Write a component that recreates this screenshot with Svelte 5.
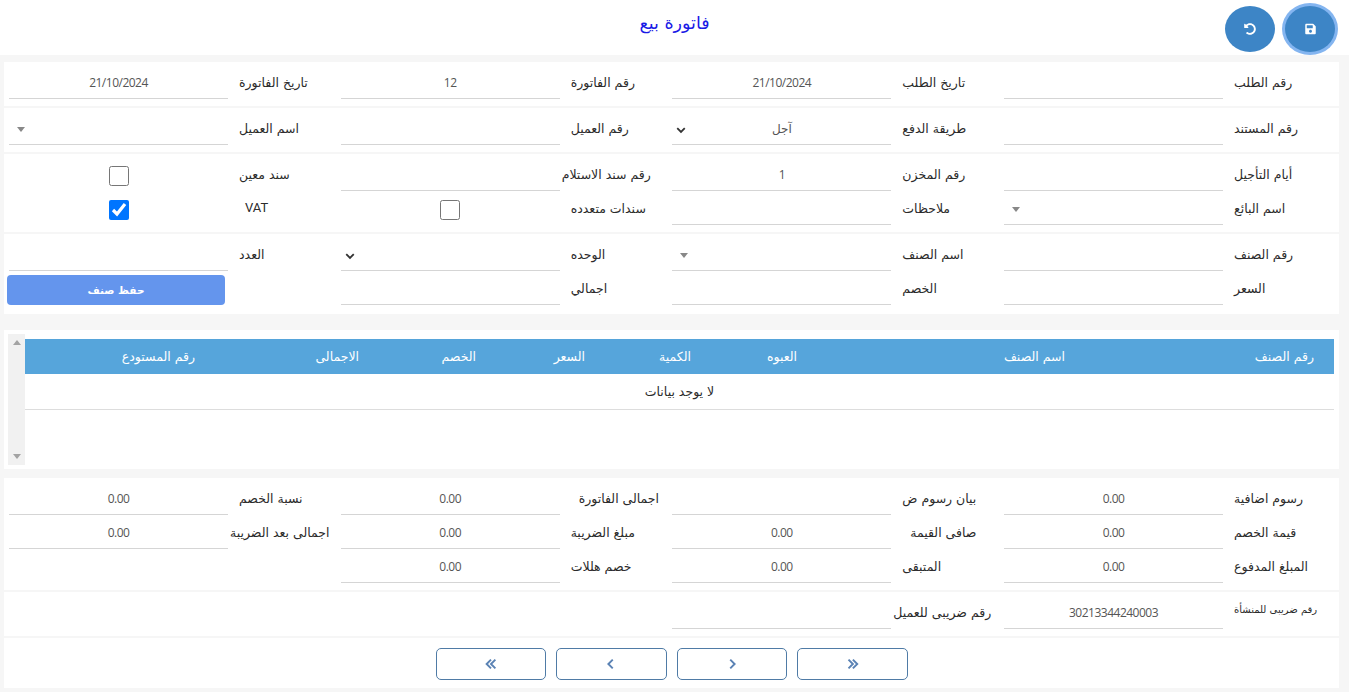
<script>
  const txt = (label, value = '', kind = 'text', cls = '') => ({ label, value, kind, cls });
  const top = [
    [txt('رقم الطلب'), txt('تاريخ الطلب', '21/10/2024'), txt('رقم الفاتورة', '12'), txt('تاريخ الفاتورة', '21/10/2024')],
    [txt('رقم المستند'), txt('طريقة الدفع', 'آجل', 'chevron'), txt('رقم العميل'), txt('اسم العميل', '', 'tri')],
    [txt('أيام التأجيل'), txt('رقم المخزن', '1'), txt('رقم سند الاستلام', '', 'text', 'p4'), txt('سند معين', '', 'check'),
     txt('اسم البائع', '', 'tri'), txt('ملاحظات'), txt('سندات متعدده', '', 'check'), txt('VAT', '', 'checked', 'vat')],
    [txt('رقم الصنف'), txt('اسم الصنف', '', 'tri'), txt('الوحده', '', 'chevron'), txt('العدد'),
     txt('السعر'), txt('الخصم'), txt('اجمالي'), txt('', '', 'button')]
  ];
  const bottom = [
    txt('رسوم اضافية', '0.00'), txt('بيان رسوم ض'), txt('اجمالى الفاتورة', '0.00', 'text', 'p18'), txt('نسبة الخصم', '0.00'),
    txt('قيمة الخصم', '0.00'), txt('صافى القيمة', '0.00', 'text', 'p18'), txt('مبلغ الضريبة', '0.00'), txt('اجمالى بعد الضريبة', '0.00', 'text', 'p2'),
    txt('المبلغ المدفوع', '0.00'), txt('المتبقى', '0.00'), txt('خصم هللات', '0.00')
  ];
  const tax = [txt('رقم ضريبى للمنشأة', '30213344240003', 'text', 'small'), txt('رقم ضريبى للعميل', '', 'text', 'p2')];
  const heads = ['رقم الصنف', 'اسم الصنف', 'العبوه', 'الكمية', 'السعر', 'الخصم', 'الاجمالى', 'رقم المستودع'];
</script>

{#snippet field(f)}
  <div class="field">
    <div class="label {f.cls}">{f.label}</div>
    {#if f.kind === 'button'}
      <button class="save-item">حفظ صنف</button>
    {:else if f.kind === 'check' || f.kind === 'checked'}
      <div class="box"><input type="checkbox" checked={f.kind === 'checked'} /></div>
    {:else}
      <div class="input">
        {f.value}
        {#if f.kind === 'chevron'}
          <svg class="chev" viewBox="0 0 16 16"><path d="M3 5.5l5 5 5-5" fill="none" stroke="#333" stroke-width="2.4"/></svg>
        {:else if f.kind === 'tri'}
          <span class="tri"></span>
        {/if}
      </div>
    {/if}
  </div>
{/snippet}

<div class="page" dir="rtl">
  <header class="head">
    <h1>فاتورة بيع</h1>
    <div class="actions">
      <button class="round focus" aria-label="حفظ">
        <svg viewBox="0 0 448 512" width="11" height="12"><path fill="#fff" d="M433.941 129.941l-83.882-83.882A48 48 0 0 0 316.118 32H48C21.49 32 0 53.49 0 80v352c0 26.51 21.49 48 48 48h352c26.51 0 48-21.49 48-48V163.882a48 48 0 0 0-14.059-33.941zM224 416c-35.346 0-64-28.654-64-64 0-35.346 28.654-64 64-64s64 28.654 64 64c0 35.346-28.654 64-64 64zm96-304.52V212c0 6.627-5.373 12-12 12H76c-6.627 0-12-5.373-12-12V108c0-6.627 5.373-12 12-12h228.52c3.183 0 6.235 1.264 8.485 3.515l3.48 3.48A11.996 11.996 0 0 1 320 111.48z"/></svg>
      </button>
      <button class="round" aria-label="تراجع">
        <svg viewBox="0 0 512 512" width="12" height="12"><path fill="#fff" d="M255.545 8c-66.269.119-126.438 26.233-170.86 68.685L48.971 40.971C33.851 25.851 8 36.559 8 57.941V192c0 13.255 10.745 24 24 24h134.059c21.382 0 32.09-25.851 16.971-40.971l-41.75-41.75c30.864-28.899 70.801-44.907 113.23-45.273 92.398-.798 170.283 73.977 169.484 169.442C423.236 348.009 349.816 424 256 424c-41.127 0-79.997-14.678-110.63-41.556-4.743-4.161-11.906-3.908-16.368.553L89.34 422.659c-4.872 4.872-4.631 12.815.482 17.433C133.798 479.813 192.074 504 256 504c136.966 0 247.999-111.033 248-247.998C504.001 119.193 392.354 7.755 255.545 8z"/></svg>
      </button>
    </div>
  </header>

  <main class="content">
    <section class="stack">
      {#each top as row, i}
        <div class="row" class:last={i === 3}>
          {#each row as f}{@render field(f)}{/each}
        </div>
      {/each}
    </section>

    <section class="table-panel">
      <div class="table">
        <div class="tr th">
          {#each heads as h}<div class="cell">{h}</div>{/each}
        </div>
        <div class="empty">لا يوجد بيانات</div>
      </div>
      <div class="scroll">
        <span class="up"></span>
        <span class="down"></span>
      </div>
    </section>

    <section class="stack">
      <div class="row">
        {#each bottom as f}{@render field(f)}{/each}
      </div>
      <div class="row">
        {#each tax as f}{@render field(f)}{/each}
      </div>
      <nav class="pager">
        {#each ['M4 3l5 5-5 5M9 3l5 5-5 5', 'M6 3l5 5-5 5', 'M10 3L5 8l5 5', 'M8 3L3 8l5 5M13 3L8 8l5 5'] as d}
          <button aria-label="تنقل"><svg viewBox="0 0 16 16" width="14" height="14"><path {d} fill="none" stroke="#5a82b4" stroke-width="2.2"/></svg></button>
        {/each}
      </nav>
    </section>
  </main>
</div>

<style>
  :global(body) {
    margin: 0;
    background: #f6f6f6;
  }
  .page {
    font-family: "DejaVu Sans", "Noto Sans", sans-serif;
    font-size: 12.5px;
    color: #2b2b2b;
    height: 692px;
    overflow: hidden;
  }
  .head {
    height: 55px;
    background: #fff;
    position: relative;
    display: flex;
    justify-content: center;
  }
  h1 {
    margin: 11px 0 0;
    font-size: 17.5px;
    font-weight: 400;
    color: #1a1ae6;
    line-height: 24px;
  }
  .actions {
    position: absolute;
    top: 6px;
    right: 14px;
    display: flex;
    gap: 10px;
  }
  .round {
    width: 50px;
    height: 46px;
    padding: 0;
    border: 0;
    border-radius: 50%;
    background: #3d85c6;
    display: flex;
    align-items: center;
    justify-content: center;
  }
  .round.focus {
    box-shadow: 0 0 0 3px #84b5f0;
  }
  .content {
    margin: 7px 10px 0 4px;
  }
  .stack {
    display: flex;
    flex-direction: column;
    gap: 2px;
  }
  .row {
    display: grid;
    grid-template-columns: repeat(4, 1fr);
    padding: 3px 3.33px 7px 5px;
    background: #fff;
  }
  .row.last {
    padding-bottom: 9px;
  }
  .field {
    display: flex;
    height: 34px;
  }
  .label {
    flex: 1;
    text-align: left;
    padding-left: 11px;
    line-height: 35px;
    white-space: nowrap;
  }
  .label.p4 { padding-left: 2px; }
  .label.p2 { padding-left: 2px; }
  .label.p18 { padding-left: 19px; }
  .label.vat {
    padding-left: 17px;
    line-height: 33px;
    font-family: "Roboto", sans-serif;
    font-size: 13px;
  }
  .label.small { font-size: 10px; line-height: 30px; }
  .input {
    width: 219px;
    box-sizing: border-box;
    border-bottom: 1px solid #d5d5d5;
    text-align: center;
    line-height: 36px;
    font-family: "Open Sans", "DejaVu Sans", sans-serif;
    font-size: 12px;
    letter-spacing: -0.5px;
    color: #555;
    position: relative;
  }
  .chev {
    position: absolute;
    left: 3px;
    top: 13px;
    width: 12px;
    height: 12px;
  }
  .tri {
    position: absolute;
    left: 8px;
    top: 16px;
    border: 4px solid transparent;
    border-top: 5px solid #888;
    border-bottom: 0;
  }
  .box {
    width: 219px;
    display: flex;
    align-items: center;
    justify-content: center;
    padding-top: 4px;
    height: 30px;
  }
  .box input {
    width: 20px;
    height: 20px;
    margin: 0;
  }
  .save-item {
    flex: none;
    width: 218px;
    height: 30px;
    margin: 4px 3px 0 -2px;
    border: 0;
    border-radius: 4px;
    background: #6495ed;
    color: #fff;
    font-family: inherit;
    font-size: 10.5px;
    font-weight: 700;
    padding: 0;
  }
  .table-panel {
    margin: 16px 0 9px;
    padding: 4px 5px 4px 4px;
    background: #fff;
    display: flex;
    height: 131px;
  }
  .table {
    flex: 1;
    padding-top: 5px;
  }
  .tr {
    display: grid;
    grid-template-columns: 249px 268px 106px 106px 109px 117px 164px 190px;
  }
  .th {
    height: 35px;
    background: #56a5db;
    color: #fff;
  }
  .cell {
    padding-right: 20px;
    line-height: 35px;
    white-space: nowrap;
  }
  .empty {
    height: 35px;
    line-height: 36px;
    text-align: center;
    border-bottom: 1px solid #ddd;
  }
  .scroll {
    width: 17px;
    background: #f1f1f1;
    position: relative;
  }
  .up, .down {
    position: absolute;
    left: 5px;
    border: 4px solid transparent;
    border-top: 0;
    border-bottom: 5px solid #a3a3a3;
  }
  .up { top: 6px; }
  .down {
    bottom: 6px;
    border-bottom: 0;
    border-top: 5px solid #a3a3a3;
  }
  .pager {
    background: #fff;
    height: 50px;
    box-sizing: border-box;
    padding-top: 2px;
    display: flex;
    justify-content: center;
    align-items: center;
    gap: 10px;
  }
  .pager button {
    width: 110.5px;
    height: 32px;
    padding: 0;
    border: 1px solid #4f7ba6;
    border-radius: 5px;
    background: #fff;
    display: flex;
    align-items: center;
    justify-content: center;
  }
</style>
